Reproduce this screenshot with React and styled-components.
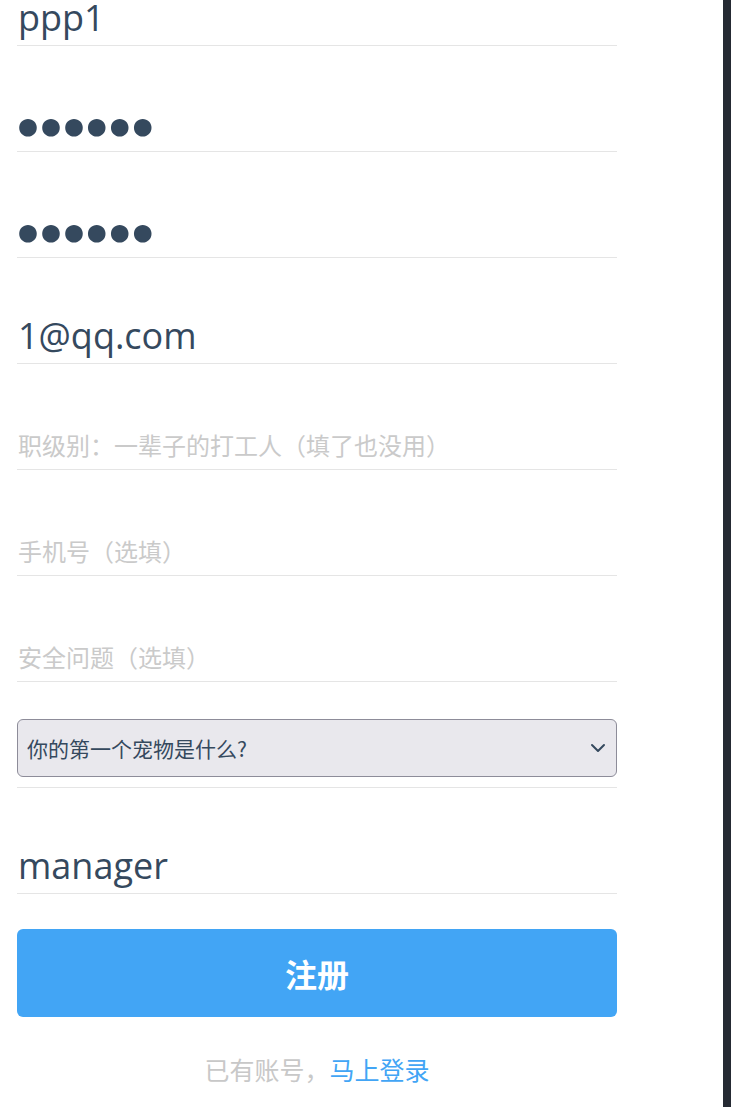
import React, { useState } from 'react'
import styled, { createGlobalStyle, css } from 'styled-components'
import { ChevronDown } from 'lucide-react'

const GlobalStyle = createGlobalStyle`
  html, body {
    margin: 0;
    padding: 0;
    background: #fff;
    overflow: hidden;
  }
  body {
    font-family: "Open Sans", "Noto Sans CJK SC", sans-serif;
    color: #35495e;
  }
`

const Page = styled.div`
  display: flex;
  height: 1107px;
  overflow: hidden;
`

const Main = styled.main`
  flex: 1;
  padding-left: 17px;
`

const SideBar = styled.aside`
  width: 8px;
  background: #252a33;
`

// the page is scrolled down a bit, so the first row is cut off at the top
const Form = styled.form`
  width: 600px;
  margin-top: -60px;
  display: flex;
  flex-direction: column;
`

const Field = styled.div`
  padding-top: 57px;
  display: flex;
  flex-direction: column;
`

const Input = styled.input`
  box-sizing: border-box;
  height: 49px;
  width: 100%;
  padding: 0 1px 7px;
  border: none;
  border-bottom: 1px solid #e5e5e5;
  outline: none;
  background: transparent;
  font-family: "Open Sans", "Noto Sans CJK SC", sans-serif;
  font-size: 36px;
  color: #35495e;

  &::placeholder {
    font-family: "Noto Sans CJK SC", sans-serif;
    font-size: 24px;
    color: #cacaca;
  }

  ${p => p.type === 'password' && css`
    padding: 4px 0 0 0;
    text-indent: -5px;
    font-family: "DejaVu Sans", sans-serif;
    font-size: 50px;
    font-weight: 700;
    letter-spacing: -9px;
  `}
`

const SelectRow = styled.div`
  padding-top: 37px;
  padding-bottom: 10px;
  border-bottom: 1px solid #e5e5e5;
`

const SelectWrap = styled.div`
  position: relative;
`

const Select = styled.select`
  appearance: none;
  box-sizing: border-box;
  width: 100%;
  height: 58px;
  padding: 0 40px 0 9px;
  border: 1px solid #8d8c99;
  border-radius: 6px;
  background: #e9e8ed;
  font-family: "Noto Sans CJK SC", sans-serif;
  font-size: 21px;
  color: #35495e;
  outline: none;
`

const Chevron = styled(ChevronDown)`
  position: absolute;
  right: 7px;
  top: 50%;
  transform: translateY(-50%);
  pointer-events: none;
  color: #35495e;
`

const SubmitButton = styled.button`
  margin-top: 35px;
  height: 88px;
  width: 100%;
  border: none;
  border-radius: 6px;
  background: #42a5f5;
  color: #fff;
  font-family: "Noto Sans CJK SC", sans-serif;
  font-size: 32px;
  font-weight: 700;
  cursor: pointer;
`

const Footer = styled.p`
  margin: 34px 0 0;
  text-align: center;
  font-family: "Noto Sans CJK SC", sans-serif;
  font-size: 25px;
  line-height: 36px;
  color: #c8c8c8;
`

const LoginLink = styled.a`
  color: #42a5f5;
  text-decoration: none;
`

function App() {
  const [values, setValues] = useState({
    username: 'ppp1',
    pwd: '123456',
    pwd2: '123456',
    email: '1@qq.com',
    level: '',
    phone: '',
    answer: '',
    question: 'pet',
    role: 'manager',
  })

  const handleChange = (event) => {
    const { id, value } = event.target
    setValues(values => ({ ...values, [id]: value }))
  }

  return (
    <>
      <GlobalStyle />
      <Page>
        <Main>
          <Form onSubmit={e => e.preventDefault()}>
            <Field>
              <Input id="username" value={values.username} onChange={handleChange} />
            </Field>
            <Field>
              <Input id="pwd" type="password" value={values.pwd} onChange={handleChange} />
            </Field>
            <Field>
              <Input id="pwd2" type="password" value={values.pwd2} onChange={handleChange} />
            </Field>
            <Field>
              <Input id="email" value={values.email} onChange={handleChange} />
            </Field>
            <Field>
              <Input id="level" placeholder="职级别：一辈子的打工人（填了也没用）" value={values.level} onChange={handleChange} />
            </Field>
            <Field>
              <Input id="phone" placeholder="手机号（选填）" value={values.phone} onChange={handleChange} />
            </Field>
            <Field>
              <Input id="answer" placeholder="安全问题（选填）" value={values.answer} onChange={handleChange} />
            </Field>
            <SelectRow>
              <SelectWrap>
                <Select id="question" value={values.question} onChange={handleChange}>
                  <option value="pet">你的第一个宠物是什么?</option>
                  <option value="city">你出生在哪个城市?</option>
                  <option value="school">你的小学叫什么名字?</option>
                </Select>
                <Chevron size={24} strokeWidth={2} />
              </SelectWrap>
            </SelectRow>
            <Field>
              <Input id="role" value={values.role} onChange={handleChange} />
            </Field>
            <SubmitButton type="submit">注册</SubmitButton>
            <Footer>
              已有账号，<LoginLink href="#">马上登录</LoginLink>
            </Footer>
          </Form>
        </Main>
        <SideBar />
      </Page>
    </>
  )
}

export default App
